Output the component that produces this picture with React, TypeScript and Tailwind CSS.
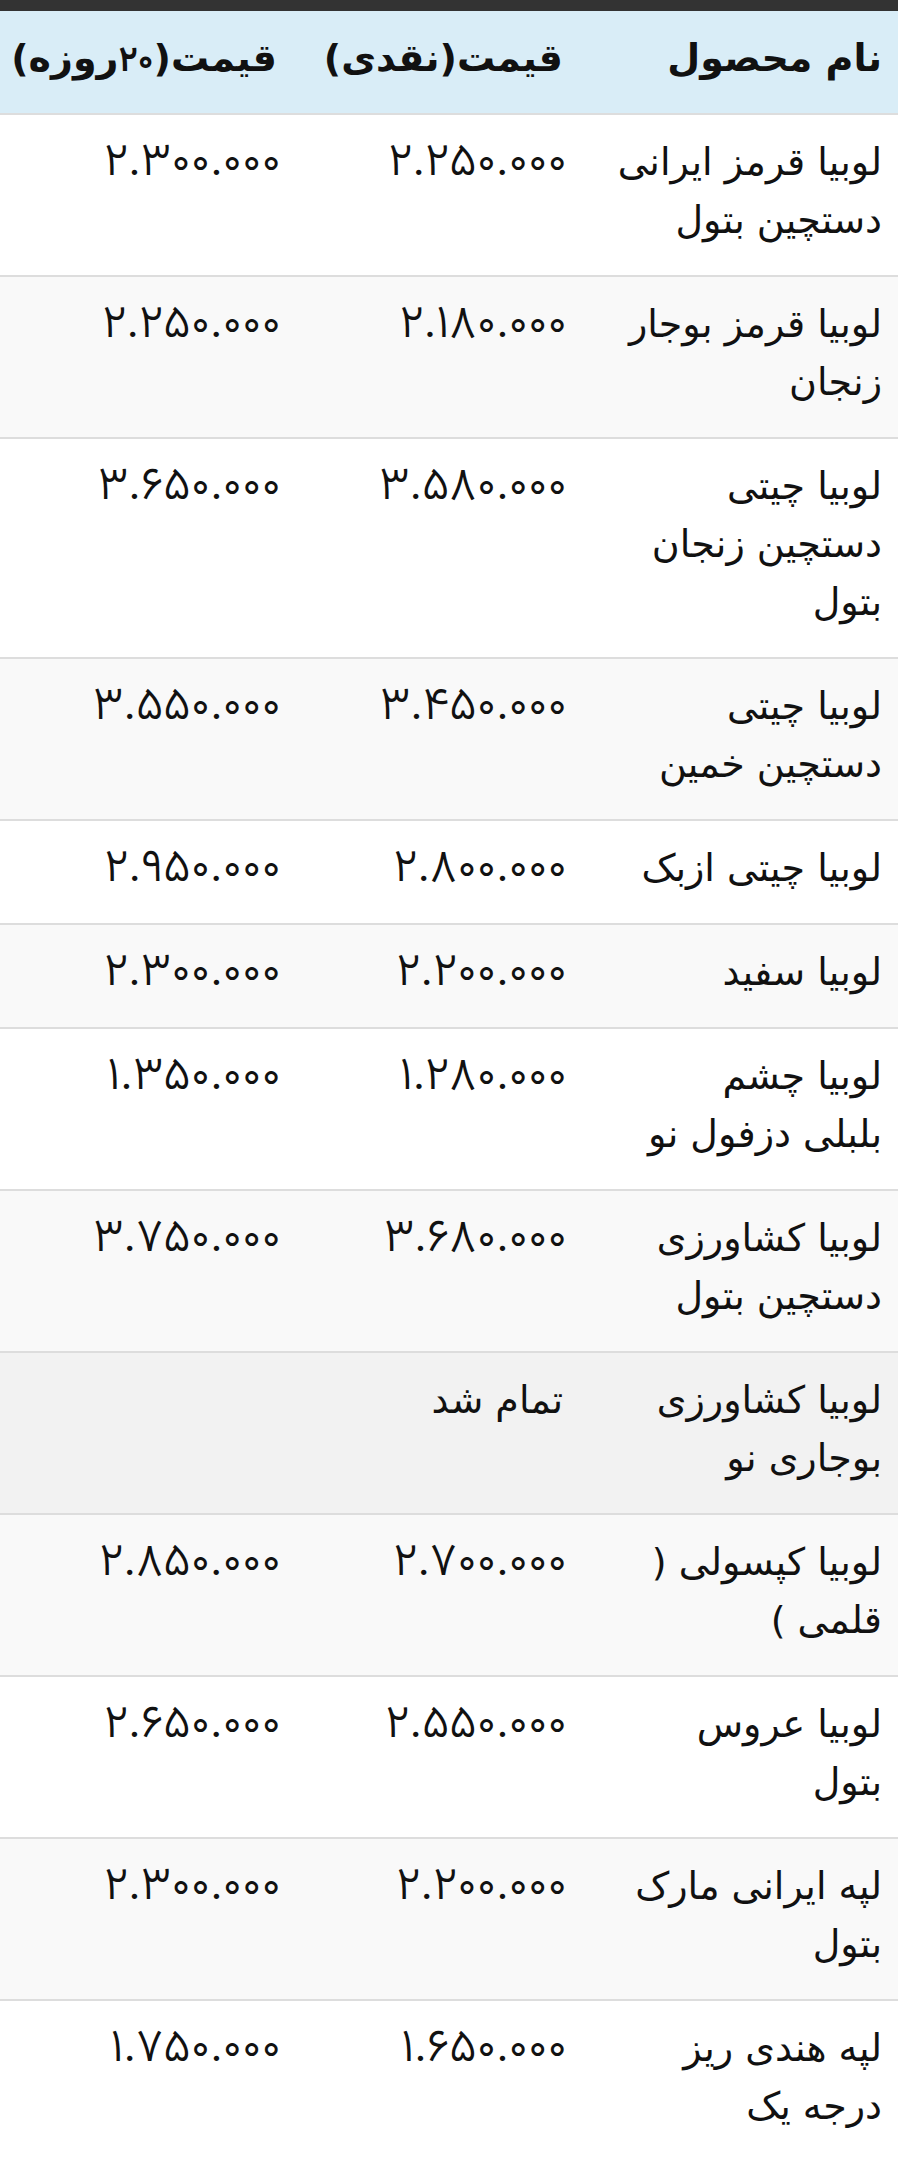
import React from "react";

type Row = { name: string[]; cash: string; credit: string; bg: string; text?: boolean };

const rows: Row[] = [
  { name: ["لوبیا قرمز ایرانی", "دستچین بتول"], cash: "۲.۲۵۰.۰۰۰", credit: "۲.۳۰۰.۰۰۰", bg: "bg-white" },
  { name: ["لوبیا قرمز بوجار", "زنجان"], cash: "۲.۱۸۰.۰۰۰", credit: "۲.۲۵۰.۰۰۰", bg: "bg-[#f9f9f9]" },
  { name: ["لوبیا چیتی", "دستچین زنجان", "بتول"], cash: "۳.۵۸۰.۰۰۰", credit: "۳.۶۵۰.۰۰۰", bg: "bg-white" },
  { name: ["لوبیا چیتی", "دستچین خمین"], cash: "۳.۴۵۰.۰۰۰", credit: "۳.۵۵۰.۰۰۰", bg: "bg-[#f9f9f9]" },
  { name: ["لوبیا چیتی ازبک"], cash: "۲.۸۰۰.۰۰۰", credit: "۲.۹۵۰.۰۰۰", bg: "bg-white" },
  { name: ["لوبیا سفید"], cash: "۲.۲۰۰.۰۰۰", credit: "۲.۳۰۰.۰۰۰", bg: "bg-[#f9f9f9]" },
  { name: ["لوبیا چشم", "بلبلی دزفول نو"], cash: "۱.۲۸۰.۰۰۰", credit: "۱.۳۵۰.۰۰۰", bg: "bg-white" },
  { name: ["لوبیا کشاورزی", "دستچین بتول"], cash: "۳.۶۸۰.۰۰۰", credit: "۳.۷۵۰.۰۰۰", bg: "bg-[#f9f9f9]" },
  { name: ["لوبیا کشاورزی", "بوجاری نو"], cash: "تمام شد", credit: "", bg: "bg-[#f2f2f2]", text: true },
  { name: ["لوبیا کپسولی (", "قلمی )"], cash: "۲.۷۰۰.۰۰۰", credit: "۲.۸۵۰.۰۰۰", bg: "bg-[#f9f9f9]" },
  { name: ["لوبیا عروس", "بتول"], cash: "۲.۵۵۰.۰۰۰", credit: "۲.۶۵۰.۰۰۰", bg: "bg-white" },
  { name: ["لپه ایرانی مارک", "بتول"], cash: "۲.۲۰۰.۰۰۰", credit: "۲.۳۰۰.۰۰۰", bg: "bg-[#f9f9f9]" },
  { name: ["لپه هندی ریز", "درجه یک"], cash: "۱.۶۵۰.۰۰۰", credit: "۱.۷۵۰.۰۰۰", bg: "bg-white" },
];

const base = "pl-4 pt-[18px] pb-[26px] text-right align-baseline whitespace-nowrap";
const cell = `${base} pr-4`;
const numCell = `${base} pr-3 font-['Vazirmatn','DejaVu_Sans',sans-serif] font-light text-[47px] leading-[30px]`;

export default function App() {
  return (
    <div className="w-[898px] min-h-[2160px] bg-white font-['DejaVu_Sans',sans-serif] text-[#111]">
      <div className="h-[11px] bg-[#333]" />
      <table dir="rtl" className="w-full table-fixed border-collapse text-[38px] leading-[58px]">
        <colgroup>
          <col className="w-[319px]" />
          <col className="w-[286px]" />
          <col className="w-[293px]" />
        </colgroup>
        <thead>
          <tr className="bg-[#d9edf7] border-b-2 border-[#dddddd]">
            <th className={`${cell} font-bold`}>نام محصول</th>
            <th className={`${cell} font-bold`}>قیمت(نقدی)</th>
            <th className={`${cell} font-bold`}>
              قیمت(<span className="font-['Vazirmatn','DejaVu_Sans',sans-serif] font-semibold text-[36px] leading-[20px]">۲۰</span>روزه)
            </th>
          </tr>
        </thead>
        <tbody>
          {rows.map((r, i) => (
            <tr key={i} className={`${r.bg} ${i > 0 ? "border-t-2 border-[#dddddd]" : ""}`}>
              <td className={cell}>
                {r.name.map((l, j) => (
                  <div key={j}>{l}</div>
                ))}
              </td>
              <td className={r.text ? cell : numCell}>{r.cash}</td>
              <td className={numCell}>{r.credit}</td>
            </tr>
          ))}
        </tbody>
      </table>
    </div>
  );
}
